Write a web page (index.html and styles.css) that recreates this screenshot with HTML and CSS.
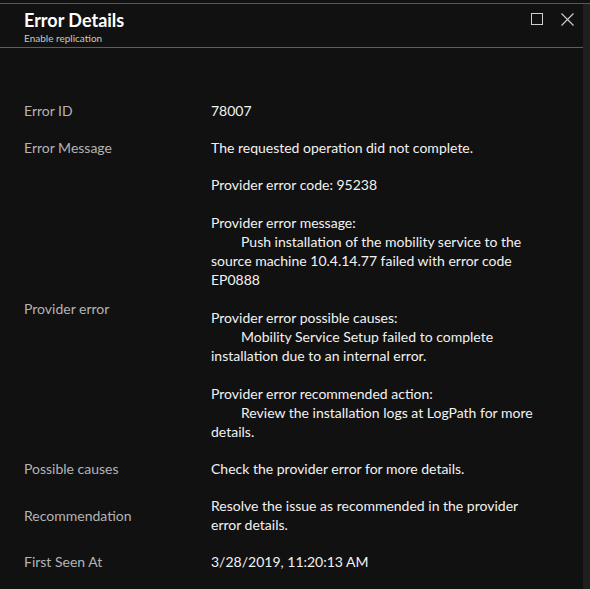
FILE: index.html
```html
<!DOCTYPE html>
<html>
<head>
<meta charset="utf-8">
<link rel="stylesheet" href="styles.css">
</head>
<body>
<div class="frame">
  <div class="blade">
    <header class="header">
      <div class="titles">
        <h1 class="title">Error Details</h1>
        <div class="subtitle">Enable replication</div>
      </div>
      <div class="controls">
        <svg class="icon" width="13" height="13" viewBox="0 0 13 13"><rect x="0.5" y="0.5" width="11" height="11" fill="none" stroke="#d0d0d0" stroke-width="1"/></svg>
        <svg class="icon" width="13" height="13" viewBox="0 0 13 13"><path d="M0.5 0.5 L12.5 12.5 M12.5 0.5 L0.5 12.5" stroke="#d0d0d0" stroke-width="1.1"/></svg>
      </div>
    </header>
    <div class="details">
      <div class="row">
        <div class="label">Error ID</div>
        <div class="value">78007</div>
      </div>
      <div class="row">
        <div class="label">Error Message</div>
        <div class="value">The requested operation did not complete.</div>
      </div>
      <div class="row">
        <div class="label">Provider error</div>
        <div class="value">
          <p>Provider error code: 95238</p>
          <p>Provider error message:<br><span class="indent"></span>Push installation of the mobility service to the source machine 10.4.14.77 failed with error code EP0888</p>
          <p>Provider error possible causes:<br><span class="indent"></span>Mobility Service Setup failed to complete installation due to an internal error.</p>
          <p>Provider error recommended action:<br><span class="indent"></span>Review the installation logs at LogPath for more details.</p>
        </div>
      </div>
      <div class="row">
        <div class="label">Possible causes</div>
        <div class="value">Check the provider error for more details.</div>
      </div>
      <div class="row">
        <div class="label">Recommendation</div>
        <div class="value">Resolve the issue as recommended in the provider error details.</div>
      </div>
      <div class="row">
        <div class="label">First Seen At</div>
        <div class="value">3/28/2019, 11:20:13 AM</div>
      </div>
    </div>
  </div>
  <div class="scrollbar"></div>
</div>
</body>
</html>
```

FILE: styles.css
```css
html, body {
  margin: 0;
  padding: 0;
  background: #111111;
  height: 100%;
  overflow: hidden;
}
body {
  font-family: "Lato", "Open Sans", sans-serif;
  color: #ffffff;
}
.frame {
  display: flex;
  margin-top: 3px;
  border-top: 1px solid #575757;
  height: 585px;
}
.blade {
  width: 583px;
  background: #111111;
}
.scrollbar {
  width: 7px;
  background: #1f1f1f;
}
.header {
  display: flex;
  justify-content: space-between;
  align-items: flex-start;
  height: 43px;
  border-bottom: 1px solid #5e5e5e;
  padding-left: 24px;
}
.title {
  margin: 4px 0 0 0;
  font-size: 18px;
  font-weight: 700;
  line-height: 24px;
  color: #ffffff;
}
.subtitle {
  font-size: 10px;
  line-height: 12px;
  color: #c8c8c8;
}
.controls {
  display: flex;
  gap: 17px;
  padding-top: 9px;
  padding-right: 9px;
}
.icon {
  display: block;
}
.details {
  padding-top: 44px;
  padding-left: 24px;
}
.row {
  display: grid;
  grid-template-columns: 187px 330px;
  align-items: center;
  padding: 9px 0;
  font-size: 14px;
  line-height: 19px;
}
.label {
  color: #b4b4b4;
}
.value {
  color: #f2f2f2;
}
.value p {
  margin: 0 0 19px 0;
}
.value p:last-child {
  margin-bottom: 0;
}
.indent {
  display: inline-block;
  width: 30px;
}
```
